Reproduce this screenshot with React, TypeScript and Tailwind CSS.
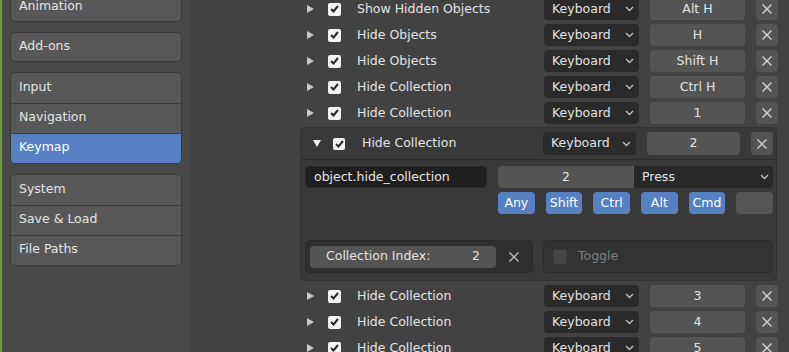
import React from 'react';

const font = { fontFamily: '"DejaVu Sans", "Liberation Sans", sans-serif' };

function Chevron() {
  return (
    <svg width="9" height="6" viewBox="0 0 9 6" className="shrink-0">
      <polyline points="1,1 4.5,4.5 8,1" fill="none" stroke="#bdbdbd" strokeWidth="1.4" />
    </svg>
  );
}

function XIcon({ color = '#d0d0d0' }: { color?: string }) {
  return (
    <svg width="12" height="12" viewBox="0 0 12 12">
      <line x1="1.5" y1="1.5" x2="10.5" y2="10.5" stroke={color} strokeWidth="1.4" />
      <line x1="10.5" y1="1.5" x2="1.5" y2="10.5" stroke={color} strokeWidth="1.4" />
    </svg>
  );
}

function Check({ size = 13 }: { size?: number }) {
  return (
    <div
      className="bg-[#f2f2f2] rounded-[2px] flex items-center justify-center shrink-0"
      style={{ width: size, height: size }}
    >
      <svg width="9" height="8" viewBox="0 0 9 8">
        <polyline points="1,4 3.5,6.5 8,1" fill="none" stroke="#2a2a2a" strokeWidth="2" />
      </svg>
    </div>
  );
}

function Dropdown({ w, h = 22 }: { w: number; h?: number }) {
  return (
    <div
      className="bg-[#2a2a2a] rounded-[4px] flex items-center justify-between pl-[8px] pr-[5px] text-[#e2e2e2] shrink-0"
      style={{ width: w, height: h }}
    >
      <span>Keyboard</span>
      <Chevron />
    </div>
  );
}

function KeyRow({ name, keyName }: { name: string; keyName: string }) {
  return (
    <div className="flex items-center h-[26px]">
      <div className="w-[28px] pl-[7px] flex items-center">
        <svg width="7" height="8" viewBox="0 0 7 8">
          <polygon points="0,0 7,4 0,8" fill="#c8c8c8" />
        </svg>
      </div>
      <Check />
      <div className="flex-1 pl-[16px] text-[#e4e4e4] whitespace-nowrap">{name}</div>
      <Dropdown w={95} />
      <div className="ml-[11px] w-[95px] h-[22px] bg-[#545454] rounded-[4px] flex items-center justify-center text-[#e4e4e4]">
        {keyName}
      </div>
      <div className="ml-[11px] w-[22px] h-[22px] bg-[#545454] rounded-[4px] flex items-center justify-center">
        <XIcon />
      </div>
    </div>
  );
}

const sideGroups = [
  ['Animation'],
  ['Add-ons'],
  ['Input', 'Navigation', 'Keymap'],
  ['System', 'Save & Load', 'File Paths'],
];

export default function App() {
  return (
    <div className="w-[789px] h-[352px] overflow-hidden flex bg-[#424242] text-[12.5px]" style={font}>
      {/* sidebar */}
      <div className="w-[191px] shrink-0 flex bg-[#484848]">
        <div className="w-[2px] bg-[#6a9c3c]" />
        <div className="flex flex-col gap-[10px] pl-[8px] mt-[-8px]">
          {sideGroups.map((group, gi) => (
            <div
              key={gi}
              className="w-[172px] rounded-[5px] border border-[#3a3a3a] bg-[#585858] overflow-hidden flex flex-col"
            >
              {group.map((item, i) => (
                <div
                  key={item}
                  className={
                    'flex items-center pl-[8px] text-[#e4e4e4] ' +
                    (group.length === 1 ? 'h-[28px] pb-[1px] ' : 'h-[30px] pb-[2px] ') +
                    (i > 0 ? 'border-t border-[#3c3c3c] ' : '') +
                    (item === 'Keymap' ? 'bg-[#5680c2] text-white' : '')
                  }
                >
                  {item}
                </div>
              ))}
            </div>
          ))}
        </div>
      </div>

      {/* main */}
      <div className="flex-1 pl-[109px]">
        <div className="w-[478px] mt-[-4px] flex flex-col">
          <KeyRow name="Show Hidden Objects" keyName="Alt H" />
          <KeyRow name="Hide Objects" keyName="H" />
          <KeyRow name="Hide Objects" keyName="Shift H" />
          <KeyRow name="Hide Collection" keyName="Ctrl H" />
          <KeyRow name="Hide Collection" keyName="1" />

          {/* expanded item */}
          <div className="mt-[1px] w-[477px] h-[154px] bg-[#393939] border border-[#333333] rounded-[5px] flex flex-col">
            <div className="h-[32px] flex items-center pr-[3px] border-b border-[#2c2c2c]">
              <div className="w-[32px] pl-[12px] flex items-center">
                <svg width="8" height="7" viewBox="0 0 8 7">
                  <polygon points="0,0 8,0 4,7" fill="#ececec" />
                </svg>
              </div>
              <Check size={12} />
              <div className="flex-1 pl-[17px] text-[#e4e4e4]">Hide Collection</div>
              <Dropdown w={93} h={23} />
              <div className="ml-[11px] w-[93px] h-[23px] bg-[#545454] rounded-[4px] flex items-center justify-center text-[#e4e4e4]">
                2
              </div>
              <div className="ml-[11px] w-[22px] h-[23px] bg-[#545454] rounded-[4px] flex items-center justify-center">
                <XIcon />
              </div>
            </div>

            <div className="flex pl-[4px] pr-[3px] pt-[6px]">
              <div className="w-[182px] h-[22px] bg-[#1f1f1f] border border-[#2b2b2b] rounded-[4px] flex items-center pl-[8px] text-[#e6e6e6]">
                object.hide_collection
              </div>
              <div className="ml-[11px] flex-1 flex flex-col gap-[4px]">
                <div className="flex h-[22px]">
                  <div className="w-[136px] bg-[#545454] rounded-l-[4px] flex items-center justify-center text-[#e4e4e4]">
                    2
                  </div>
                  <div className="flex-1 bg-[#282828] rounded-r-[4px] flex items-center justify-between pl-[8px] pr-[4px] text-[#e4e4e4]">
                    <span>Press</span>
                    <Chevron />
                  </div>
                </div>
                <div className="grid grid-cols-6 gap-[11px] h-[22px]">
                  {['Any', 'Shift', 'Ctrl', 'Alt', 'Cmd'].map((m) => (
                    <div
                      key={m}
                      className="bg-[#5680c2] rounded-[4px] flex items-center justify-center text-white"
                    >
                      {m}
                    </div>
                  ))}
                  <div className="bg-[#555555] rounded-[4px]" />
                </div>
              </div>
            </div>

            <div className="flex pl-[4px] pr-[3px] mt-[26px] gap-[10px]">
              <div className="w-[228px] h-[33px] bg-[#2f2f2f] border border-[#2a2a2a] rounded-[5px] flex items-center pl-[4px]">
                <div className="w-[186px] h-[22px] bg-[#545454] rounded-[4px] flex items-center justify-between pl-[16px] pr-[16px] text-[#e4e4e4]">
                  <span>Collection Index:</span>
                  <span>2</span>
                </div>
                <div className="flex-1 flex items-center justify-center">
                  <XIcon color="#bdbdbd" />
                </div>
              </div>
              <div className="flex-1 h-[33px] bg-[#333333] border border-[#2c2c2c] rounded-[5px] flex items-center pl-[9px]">
                <div className="w-[14px] h-[14px] bg-[#464646] rounded-[3px]" />
                <span className="ml-[11px] text-[#7d7d7d]">Toggle</span>
              </div>
            </div>
          </div>

          <div className="mt-[2px]">
            <KeyRow name="Hide Collection" keyName="3" />
            <KeyRow name="Hide Collection" keyName="4" />
            <KeyRow name="Hide Collection" keyName="5" />
          </div>
        </div>
      </div>
    </div>
  );
}
